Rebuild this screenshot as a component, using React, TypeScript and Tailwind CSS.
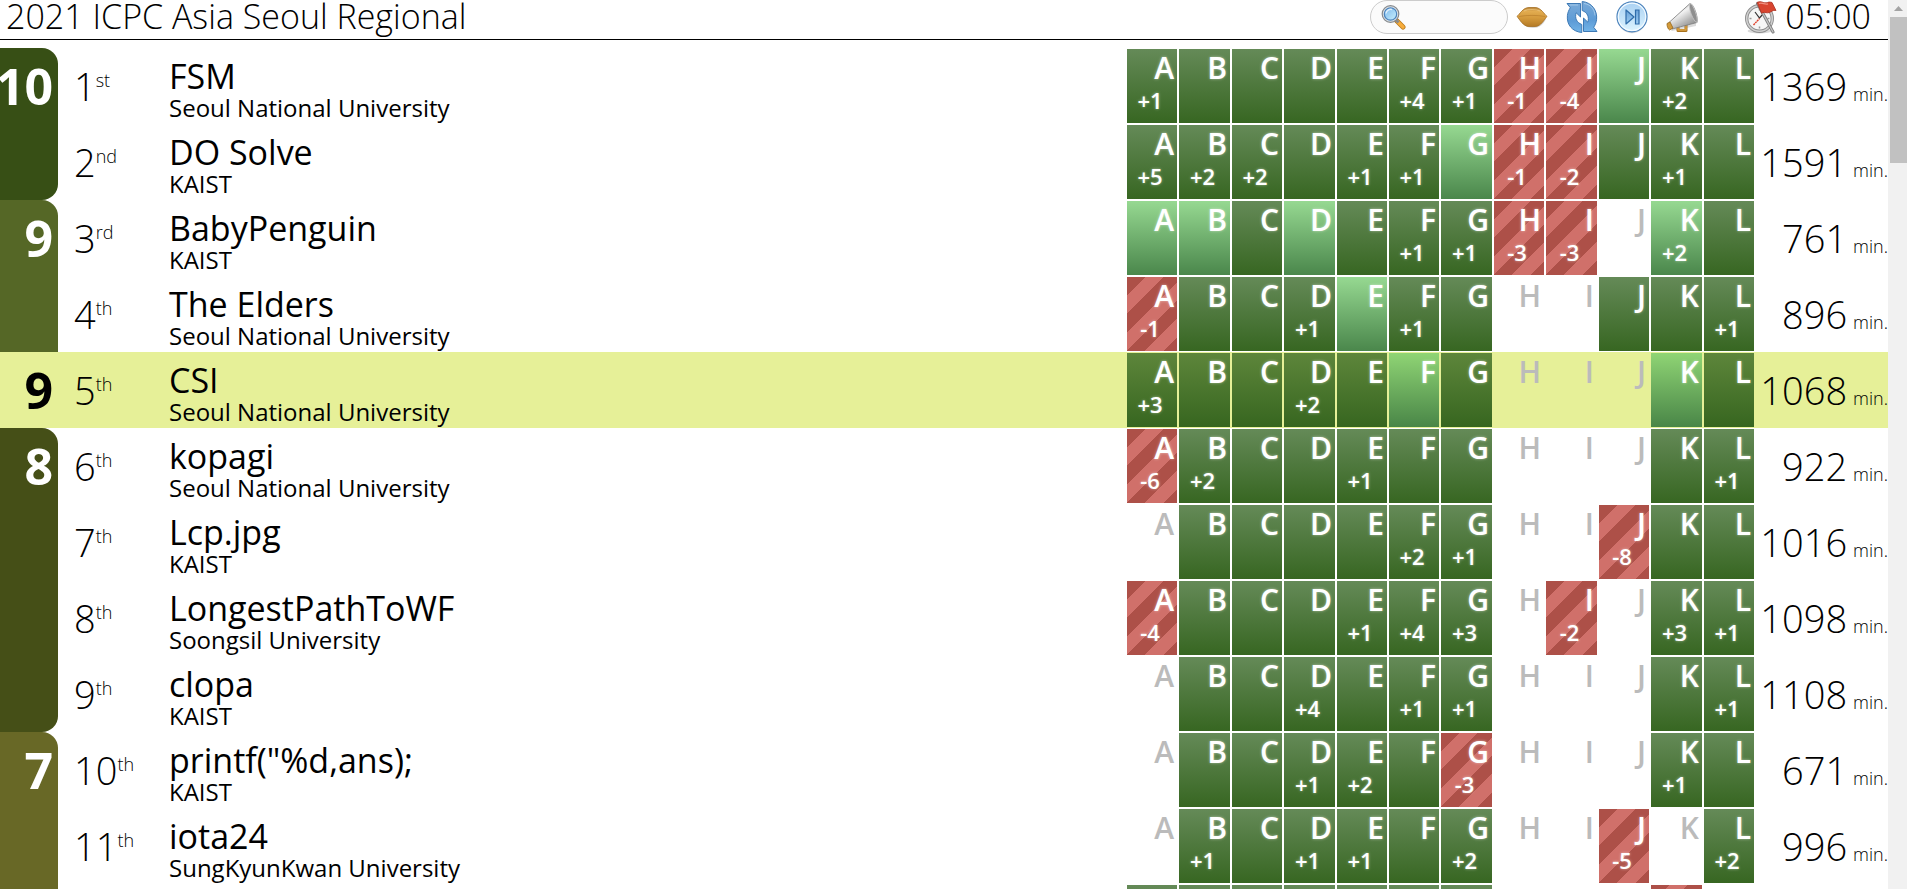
import React from "react";

type Row = {
  solved: number;
  rank: number;
  name: string;
  org: string;
  cells: string[];
  penalty?: number;
  self?: boolean;
  group?: string;
  first?: boolean;
  last?: boolean;
};

// Cell codes: "g" solved, "f" first to solve, "r" failed, "." untouched; a signed number is the attempt count.
const parse = (s: string) => s.split(" ").map((c) => (c === "." ? "" : c));

const G10 = "bg-[#374f15]";
const G9 = "bg-[#556726]";
const G8 = "bg-[#454f17]";
const G7 = "bg-[#686826]";

const rows: Row[] = [
  { solved: 10, rank: 1, name: "FSM", org: "Seoul National University", cells: parse("g+1 g g g g g+4 g+1 r-1 r-4 f g+2 g"), penalty: 1369, group: G10, first: true },
  { solved: 10, rank: 2, name: "DO Solve", org: "KAIST", cells: parse("g+5 g+2 g+2 g g+1 g+1 f r-1 r-2 g g+1 g"), penalty: 1591, group: G10, last: true },
  { solved: 9, rank: 3, name: "BabyPenguin", org: "KAIST", cells: parse("f f g f g g+1 g+1 r-3 r-3 . f+2 g"), penalty: 761, group: G9, first: true },
  { solved: 9, rank: 4, name: "The Elders", org: "Seoul National University", cells: parse("r-1 g g g+1 f g+1 g . . g g g+1"), penalty: 896, group: G9 },
  { solved: 9, rank: 5, name: "CSI", org: "Seoul National University", cells: parse("g+3 g g g+2 g f g . . . f g"), penalty: 1068, self: true },
  { solved: 8, rank: 6, name: "kopagi", org: "Seoul National University", cells: parse("r-6 g+2 g g g+1 g g . . . g g+1"), penalty: 922, group: G8, first: true },
  { solved: 8, rank: 7, name: "Lcp.jpg", org: "KAIST", cells: parse(". g g g g g+2 g+1 . . r-8 g g"), penalty: 1016, group: G8 },
  { solved: 8, rank: 8, name: "LongestPathToWF", org: "Soongsil University", cells: parse("r-4 g g g g+1 g+4 g+3 . r-2 . g+3 g+1"), penalty: 1098, group: G8 },
  { solved: 8, rank: 9, name: "clopa", org: "KAIST", cells: parse(". g g g+4 g g+1 g+1 . . . g g+1"), penalty: 1108, group: G8, last: true },
  { solved: 7, rank: 10, name: 'printf("%d,ans);', org: "KAIST", cells: parse(". g g g+1 g+2 g r-3 . . . g+1 g"), penalty: 671, group: G7, first: true },
  { solved: 7, rank: 11, name: "iota24", org: "SungKyunKwan University", cells: parse(". g+1 g g+1 g+1 g g+2 . . r-5 . g+2"), penalty: 996, group: G7 },
  { solved: 7, rank: 12, name: "", org: "", cells: parse("g g g g g g g . . . r ."), group: G7 },
];

const problems = [
  { letter: "A", width: "w-[52px]" },
  { letter: "B", width: "w-[53px]" },
  { letter: "C", width: "w-[52px]" },
  { letter: "D", width: "w-[53px]" },
  { letter: "E", width: "w-[52px]" },
  { letter: "F", width: "w-[52px]" },
  { letter: "G", width: "w-[53px]" },
  { letter: "H", width: "w-[52px]" },
  { letter: "I", width: "w-[53px]" },
  { letter: "J", width: "w-[52px]" },
  { letter: "K", width: "w-[53px]" },
  { letter: "L", width: "w-[52px]" },
];

const tone: Record<string, string> = {
  g: "bg-linear-to-b from-[#295d17b8] to-[#33631dfa]",
  f: "bg-linear-to-b from-[#6eca67b8] to-[#438244f5]",
  r: "bg-[repeating-linear-gradient(135deg,#ad5048_0_13px,#d0706a_13px_26px)]",
};

const suffix = (n: number) => (n === 1 ? "st" : n === 2 ? "nd" : n === 3 ? "rd" : "th");

function Cell({ code, letter }: { code: string; letter: string }) {
  return (
    <td className="p-px">
      <div
        className={
          "h-[74px] font-semibold " +
          (code ? "text-white [text-shadow:0_0_3px_#ffffff80] " + tone[code[0]] : "text-[#bbb]")
        }
      >
        <div className="pr-[3px] text-right text-[30px] leading-[38px]">{letter}</div>
        <div className="pr-1 text-center text-[22px] leading-[26px]">{code.slice(1)}</div>
      </div>
    </td>
  );
}

function TeamRow({ row }: { row: Row }) {
  return (
    <tr className={"h-[76px] " + (row.self ? "bg-[#e6f098]" : "")}>
      <td className="p-0">
        <div
          className={
            "flex h-[76px] justify-end pr-[5px] text-[50px] leading-[76px] font-bold " +
            (row.self ? "text-black" : "text-white " + row.group) +
            (row.first ? " rounded-tr-2xl" : "") +
            (row.last ? " rounded-br-2xl" : "")
          }
        >
          {row.first || row.self ? row.solved : ""}
        </div>
      </td>
      <td className="p-0 pl-4 text-[38px] leading-[76px] font-light">
        <div className="flex h-[76px]">
          {row.rank}
          <span className="text-lg leading-[64px]">{suffix(row.rank)}</span>
        </div>
      </td>
      <td className="p-0 align-top">
        <div className="pt-2 text-[34px] leading-10">{row.name}</div>
        <div className="text-2xl leading-6">{row.org}</div>
      </td>
      {row.cells.map((c, i) => (
        <Cell key={i} code={c} letter={problems[i].letter} />
      ))}
      <td className="p-0 text-right font-light whitespace-nowrap">
        {row.penalty && (
          <div className="flex h-[76px] items-baseline justify-end gap-1.5 text-[38px] leading-[76px]">
            {row.penalty}
            <span className="text-lg leading-6">min.</span>
          </div>
        )}
      </td>
    </tr>
  );
}

function MagnifierIcon() {
  return (
    <svg viewBox="0 0 26 26" className="size-[26px]">
      <path d="M15.5 16.5 22 23" stroke="#b97a1c" strokeWidth="5" strokeLinecap="round" />
      <path d="M16.5 17.5 22 23" stroke="#f7ac3c" strokeWidth="3.4" strokeLinecap="round" />
      <path d="m14.5 15.500 3 3" stroke="#8b8b8b" strokeWidth="3" />
      <circle cx="9.500" cy="10" r="8.300" fill="#dfe3e6" stroke="#85898d" strokeWidth="1.200" />
      <circle cx="9.500" cy="10" r="6.200" fill="url(#lens)" stroke="#4b83bd" strokeWidth="1.200" />
      <path d="M5 9.500a4.600 4.600 0 0 1 6-4" stroke="#fff" strokeWidth="1.500" fill="none" opacity=".7" />
      <defs>
        <linearGradient id="lens" x1="0" y1="0" x2="1" y2="1">
          <stop stopColor="#7cb8ec" />
          <stop offset="1" stopColor="#c9f0fd" />
        </linearGradient>
      </defs>
    </svg>
  );
}

function SeedIcon() {
  return (
    <svg viewBox="0 0 32 34" className="h-[34px] w-8">
      <defs>
        <linearGradient id="seed" x1="0" y1="0" x2="0" y2="1">
          <stop stopColor="#b9853a" />
          <stop offset=".2" stopColor="#e2ac50" />
          <stop offset=".55" stopColor="#d49a3c" />
          <stop offset="1" stopColor="#b47a26" />
        </linearGradient>
      </defs>
      <path d="M3 19c4 6 8 9 14 9s10-3 13-9z" fill="#000" opacity=".16" />
      <path d="M1 16.500C3.500 14.500 7 7.500 13 7.500h6C25 7.500 28.500 14.500 31 16.500 28.500 19 25 26.500 19 26.500h-6C7 26.500 3.500 19 1 16.500z" fill="url(#seed)" stroke="#a56f22" strokeWidth=".8" />
      <path d="M3 16.500c8-1.500 18-1.500 26 0" stroke="#b97f2c" strokeWidth="1" fill="none" opacity=".7" />
      <path d="M8 11c4-2 12-2 16 0" stroke="#f0cd8c" strokeWidth="1.200" fill="none" opacity=".6" />
    </svg>
  );
}

function RefreshIcon() {
  return (
    <svg viewBox="0 0 32 34" className="h-[34px] w-8">
      <defs>
        <linearGradient id="swap" x1="0" y1="0" x2="0" y2="1">
          <stop stopColor="#78a9d8" />
          <stop offset=".6" stopColor="#5d9bd6" />
          <stop offset="1" stopColor="#72b4e8" />
        </linearGradient>
      </defs>
      <g fill="url(#swap)" stroke="#3d79b5" strokeWidth="1" strokeLinejoin="round">
        <path d="M1 3.500h13.500V17l-4.300-4.200c-1.600 5.200.3 9.700 5.600 11.700v8C6 31.500.6 24.500 1.400 15.700c.2-2.700 1.200-5.200 2.900-8z" />
        <path d="M31 31.500H17.500V18l4.300 4.200c1.600-5.200-.3-9.700-5.600-11.700V1.500C26 2.500 31.400 10.500 30.600 19.300c-.2 2.700-1.200 5.200-2.900 8z" />
      </g>
      <path d="M3.500 5H12M18 3.500c6 .8 10.500 5 11 12" stroke="#b7d5f0" strokeWidth="1" fill="none" opacity=".7" />
    </svg>
  );
}

function SkipIcon() {
  return (
    <svg viewBox="0 0 32 34" className="h-[34px] w-8">
      <defs>
        <linearGradient id="disc" x1="0" y1="0" x2="0" y2="1">
          <stop stopColor="#a9d0f2" />
          <stop offset="1" stopColor="#dcf4ff" />
        </linearGradient>
        <linearGradient id="glyph" x1="0" y1="0" x2="0" y2="1">
          <stop stopColor="#6ba2d8" />
          <stop offset="1" stopColor="#9ccdf2" />
        </linearGradient>
      </defs>
      <ellipse cx="16" cy="18" rx="14.500" ry="15.300" fill="#000" opacity=".15" />
      <circle cx="16" cy="16.800" r="15" fill="url(#disc)" stroke="#4c83bc" strokeWidth="1.200" />
      <circle cx="16" cy="16.800" r="13.700" fill="none" stroke="#f3faff" strokeWidth="1.100" />
      <path d="M10 10v14l8-7z" fill="url(#glyph)" stroke="#2f6ca9" strokeWidth="1.200" strokeLinejoin="round" />
      <path d="M19.500 10h3.500v14h-3.500z" fill="url(#glyph)" stroke="#2f6ca9" strokeWidth="1.200" />
    </svg>
  );
}

function MegaphoneIcon() {
  return (
    <svg viewBox="0 0 32 34" className="h-[34px] w-8">
      <defs>
        <linearGradient id="horn" x1="0" y1="0" x2=".7" y2="1">
          <stop stopColor="#8f8f8f" />
          <stop offset=".45" stopColor="#f2f2f2" />
          <stop offset=".75" stopColor="#b5b5b5" />
          <stop offset="1" stopColor="#8a8a8a" />
        </linearGradient>
      </defs>
      <path d="M4 29.500 30 23v3L6 31z" fill="#000" opacity=".14" />
      <path d="M12 26v4.500h8V25" fill="none" stroke="#a8711c" strokeWidth="3" strokeLinejoin="round" />
      <path d="M12 26v4h8V25" fill="none" stroke="#dda444" strokeWidth="1.400" strokeLinejoin="round" />
      <path d="M3 22.500 24 3.500c3-.5 8.500 13 7 19L6 29z" fill="url(#horn)" stroke="#777" strokeWidth=".8" />
      <path d="M24 3.500c-2.500 3 3.500 19 7 19 1.500-4-4-19.500-7-19z" fill="#8f8f8f" stroke="#c8c8c8" strokeWidth=".8" />
      <path d="M1 23.500 4 22l3 6-3.500 2c-1.500-.8-2.700-4-2.500-6.500z" fill="#d39a38" stroke="#94641a" strokeWidth=".8" />
    </svg>
  );
}

function ClockIcon() {
  return (
    <svg viewBox="0 0 32 34" className="h-[34px] w-8">
      <ellipse cx="14.500" cy="31" rx="12" ry="2.500" fill="#000" opacity=".15" />
      <circle cx="14.500" cy="18.500" r="12.800" fill="#f6f6f6" stroke="#8d8d8d" strokeWidth="3.400" />
      <circle cx="14.500" cy="18.500" r="12.800" fill="none" stroke="#cfcfcf" strokeWidth="1.600" />
      <path d="M14.500 8.500v2M14.500 26.500v2M4.500 18.500h2M22.500 18.500h2" stroke="#999" strokeWidth="1.500" />
      <path d="m10 12 4.500 6 3.500-4" stroke="#333" strokeWidth="1.200" fill="none" />
      <path d="m8.500 25 6-6.500" stroke="#e0402a" strokeWidth="1.400" strokeDasharray="2 .6" />
      <path d="M12.500 3.500 28 32" stroke="#7d7d7d" strokeWidth="3" strokeLinecap="round" />
      <path d="M12.500 3.500 28 32" stroke="#c4c4c4" strokeWidth="1.300" strokeLinecap="round" />
      <path d="M12 2.500c4-2.500 6.500 1.500 10.500 0 2-.8 3-.3 4.500 0l4 8c-3.500-1-5 2.500-8.500 2.300-2 0-4-1-6 .4z" fill="#d8452f" stroke="#a92f1e" strokeWidth=".8" />
      <path d="M14 3.500c3.500-1.300 5.500 1.500 9 .4" stroke="#f0907f" strokeWidth="1.200" fill="none" />
    </svg>
  );
}

export default function App() {
  return (
    <div className="flex h-screen overflow-hidden bg-white font-['Open_Sans',sans-serif] text-black">
      <div className="h-full min-w-0 flex-1 overflow-hidden">
        <header className="mb-2 flex h-10 items-start border-b border-black pr-[17px] pl-1.5">
          <h1 className="flex-1 text-[34px] leading-8 font-light">2021 ICPC Asia Seoul Regional</h1>
          <label className="mr-2 flex h-[34px] w-[138px] items-center rounded-full border border-[#ccc] bg-[#fbfbfb] pr-3 pl-2.5">
            <MagnifierIcon />
            <input type="text" aria-label="Search" className="min-w-0 flex-1 bg-transparent text-lg outline-none" />
          </label>
          <div className="mr-[47px] flex gap-[18px]">
            <button type="button" aria-label="Seed">
              <SeedIcon />
            </button>
            <button type="button" aria-label="Refresh">
              <RefreshIcon />
            </button>
            <button type="button" aria-label="Skip to end">
              <SkipIcon />
            </button>
            <button type="button" aria-label="Announcements">
              <MegaphoneIcon />
            </button>
          </div>
          <div className="flex gap-2 text-[34px] leading-8 font-light">
            <ClockIcon />
            <time>05:00</time>
          </div>
        </header>
        <table className="w-full table-fixed border-collapse">
          <colgroup>
            <col className="w-[58px]" />
            <col className="w-[111px]" />
            <col />
            {problems.map((p) => (
              <col key={p.letter} className={p.width} />
            ))}
            <col className="w-[133px]" />
          </colgroup>
          <tbody>
            {rows.map((r) => (
              <TeamRow key={r.rank} row={r} />
            ))}
          </tbody>
        </table>
      </div>
      <div className="w-[19px] bg-[#f1f1f1] pl-0.5">
        <div className="flex h-[17px] items-center justify-center">
          <svg viewBox="0 0 9 5" className="h-[5px] w-[9px]">
            <path d="M0 5 4.500 0 9 5z" fill="#a3a3a3" />
          </svg>
        </div>
        <div className="h-[146px] bg-[#c1c1c1]" />
      </div>
    </div>
  );
}
